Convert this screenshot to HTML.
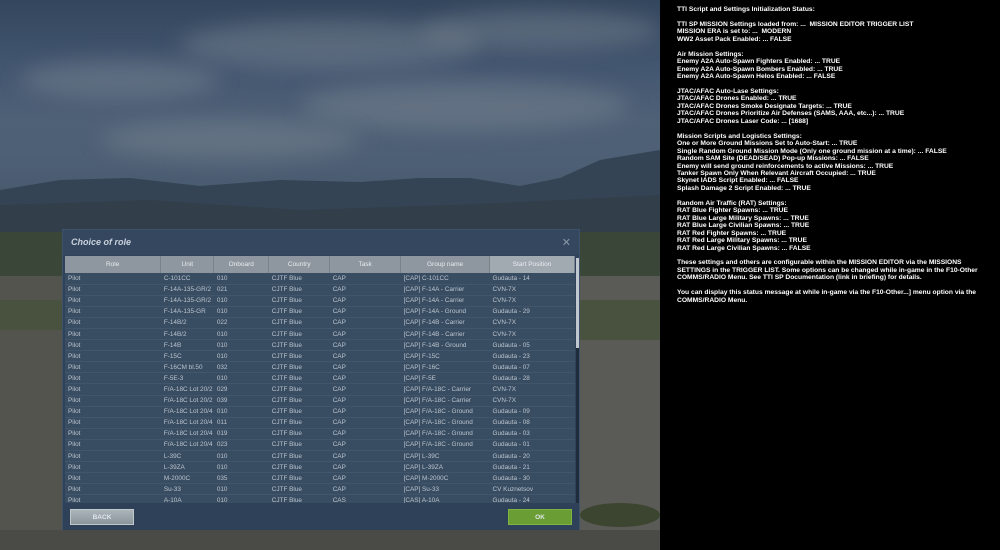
<!DOCTYPE html>
<html><head><meta charset="utf-8"><style>
*{margin:0;padding:0;box-sizing:border-box}
body{width:1000px;height:550px;overflow:hidden;position:relative;font-family:"Liberation Sans",sans-serif;background:#000}
#scene{position:absolute;left:0;top:0;width:660px;height:550px;overflow:hidden;
background:linear-gradient(180deg,#33465d 0%,#435670 12%,#4f6177 22%,#4d5f74 30%,#46576b 38%,#3f4d5c 45%)}
.cl{position:absolute;border-radius:50%;background:rgba(130,140,150,.4);filter:blur(10px)}
#mtn{position:absolute;left:0;top:0}
#text{position:absolute;left:677px;top:6px;color:#fff;font-weight:bold;font-size:6.7px;line-height:7.45px;white-space:pre;font-family:"Liberation Sans",sans-serif}
#dlg{position:absolute;left:62px;top:229px;width:518px;height:301px;background:#2f4259;border:1px solid #3d526b}
#hd{height:25px;background:#34475f;color:#c9d2dc;font-style:italic;font-weight:bold;font-size:9px;line-height:25px;padding-left:8px}
#x{position:absolute;right:8px;top:6px;color:#8a98a8;font-size:11px}
table{position:absolute;left:2px;top:26px;width:510px;border-collapse:collapse;font-size:6.4px;color:#bcc5ce}
th{background:#8e979f;color:#e8ecef;font-weight:normal;height:17px;border-right:1px solid #7a838b;font-size:6.5px}
th:last-child{background:#a2aab1}
td{height:11.1px;padding-left:3px;background:rgba(58,78,100,.82);border-bottom:1px solid rgba(80,100,120,.6);white-space:nowrap;overflow:hidden}
#sb{position:absolute;left:513px;top:28px;width:3px;height:245px;background:#1e2c3c}
#sb div{height:90px;background:#c0c7ce;width:3px}
#ft{position:absolute;left:0;top:273px;width:516px;height:27px;background:#2e4159}
.btn{position:absolute;top:6px;width:64px;height:16px;font-size:6.5px;font-weight:bold;color:#e0e6ea;text-align:center;line-height:16px}
</style></head><body>
<div id="scene">
<div class="cl" style="left:180px;top:20px;width:300px;height:50px"></div>
<div class="cl" style="left:20px;top:60px;width:200px;height:40px"></div>
<div class="cl" style="left:300px;top:80px;width:330px;height:50px"></div>
<div class="cl" style="left:100px;top:120px;width:260px;height:40px"></div>
<div class="cl" style="left:420px;top:10px;width:240px;height:40px"></div>
<svg id="mtn" width="660" height="550">
<path d="M0 190 L60 180 L130 178 L200 186 L280 180 L360 182 L420 178 L470 178 L520 186 L560 178 L600 160 L660 150 L660 240 L0 240Z" fill="#344455"/>
<path d="M0 205 L150 200 L300 210 L450 205 L560 200 L660 195 L660 240 L0 240Z" fill="#323f4a"/>
<rect x="0" y="232" width="660" height="45" fill="#3a4638"/>
<rect x="0" y="276" width="62" height="274" fill="#52544d"/>
<rect x="580" y="276" width="80" height="274" fill="#5a5b56"/>
<rect x="0" y="300" width="62" height="30" fill="#48523f"/>
<rect x="580" y="300" width="80" height="40" fill="#48523f"/>
<rect x="0" y="530" width="660" height="20" fill="#4a4b46"/>
<ellipse cx="620" cy="515" rx="40" ry="12" fill="#3c4530"/>
</svg>
<div id="dlg">
<div id="hd">Choice of role</div><div id="x">✕</div>
<table>
<colgroup><col style="width:96px"><col style="width:53px"><col style="width:55px"><col style="width:61px"><col style="width:71px"><col style="width:89px"><col style="width:85px"></colgroup>
<tr><th>Role</th><th>Unit</th><th>Onboard</th><th>Country</th><th>Task</th><th>Group name</th><th>Start Position</th></tr>
<tr><td>Pilot</td><td>C-101CC</td><td>010</td><td>CJTF Blue</td><td>CAP</td><td>[CAP] C-101CC</td><td>Gudauta - 14</td></tr>
<tr><td>Pilot</td><td>F-14A-135-GR/2</td><td>021</td><td>CJTF Blue</td><td>CAP</td><td>[CAP] F-14A - Carrier</td><td>CVN-7X</td></tr>
<tr><td>Pilot</td><td>F-14A-135-GR/2</td><td>010</td><td>CJTF Blue</td><td>CAP</td><td>[CAP] F-14A - Carrier</td><td>CVN-7X</td></tr>
<tr><td>Pilot</td><td>F-14A-135-GR</td><td>010</td><td>CJTF Blue</td><td>CAP</td><td>[CAP] F-14A - Ground</td><td>Gudauta - 29</td></tr>
<tr><td>Pilot</td><td>F-14B/2</td><td>022</td><td>CJTF Blue</td><td>CAP</td><td>[CAP] F-14B - Carrier</td><td>CVN-7X</td></tr>
<tr><td>Pilot</td><td>F-14B/2</td><td>010</td><td>CJTF Blue</td><td>CAP</td><td>[CAP] F-14B - Carrier</td><td>CVN-7X</td></tr>
<tr><td>Pilot</td><td>F-14B</td><td>010</td><td>CJTF Blue</td><td>CAP</td><td>[CAP] F-14B - Ground</td><td>Gudauta - 05</td></tr>
<tr><td>Pilot</td><td>F-15C</td><td>010</td><td>CJTF Blue</td><td>CAP</td><td>[CAP] F-15C</td><td>Gudauta - 23</td></tr>
<tr><td>Pilot</td><td>F-16CM bl.50</td><td>032</td><td>CJTF Blue</td><td>CAP</td><td>[CAP] F-16C</td><td>Gudauta - 07</td></tr>
<tr><td>Pilot</td><td>F-5E-3</td><td>010</td><td>CJTF Blue</td><td>CAP</td><td>[CAP] F-5E</td><td>Gudauta - 28</td></tr>
<tr><td>Pilot</td><td>F/A-18C Lot 20/2</td><td>029</td><td>CJTF Blue</td><td>CAP</td><td>[CAP] F/A-18C - Carrier</td><td>CVN-7X</td></tr>
<tr><td>Pilot</td><td>F/A-18C Lot 20/2</td><td>039</td><td>CJTF Blue</td><td>CAP</td><td>[CAP] F/A-18C - Carrier</td><td>CVN-7X</td></tr>
<tr><td>Pilot</td><td>F/A-18C Lot 20/4</td><td>010</td><td>CJTF Blue</td><td>CAP</td><td>[CAP] F/A-18C - Ground</td><td>Gudauta - 09</td></tr>
<tr><td>Pilot</td><td>F/A-18C Lot 20/4</td><td>011</td><td>CJTF Blue</td><td>CAP</td><td>[CAP] F/A-18C - Ground</td><td>Gudauta - 08</td></tr>
<tr><td>Pilot</td><td>F/A-18C Lot 20/4</td><td>019</td><td>CJTF Blue</td><td>CAP</td><td>[CAP] F/A-18C - Ground</td><td>Gudauta - 03</td></tr>
<tr><td>Pilot</td><td>F/A-18C Lot 20/4</td><td>023</td><td>CJTF Blue</td><td>CAP</td><td>[CAP] F/A-18C - Ground</td><td>Gudauta - 01</td></tr>
<tr><td>Pilot</td><td>L-39C</td><td>010</td><td>CJTF Blue</td><td>CAP</td><td>[CAP] L-39C</td><td>Gudauta - 20</td></tr>
<tr><td>Pilot</td><td>L-39ZA</td><td>010</td><td>CJTF Blue</td><td>CAP</td><td>[CAP] L-39ZA</td><td>Gudauta - 21</td></tr>
<tr><td>Pilot</td><td>M-2000C</td><td>035</td><td>CJTF Blue</td><td>CAP</td><td>[CAP] M-2000C</td><td>Gudauta - 30</td></tr>
<tr><td>Pilot</td><td>Su-33</td><td>010</td><td>CJTF Blue</td><td>CAP</td><td>[CAP] Su-33</td><td>CV Kuznetsov</td></tr>
<tr><td>Pilot</td><td>A-10A</td><td>010</td><td>CJTF Blue</td><td>CAS</td><td>[CAS] A-10A</td><td>Gudauta - 24</td></tr>
</table>
<div id="sb"><div></div></div>
<div id="ft">
<div class="btn" style="left:7px;background:linear-gradient(#aab4b9,#8b969c);border:1px solid #c0c8cc">BACK</div>
<div class="btn" style="left:445px;background:#6a9e34;border:1px solid #7fb444">OK</div>
</div>
</div>
</div>
<div id="text">TTI Script and Settings Initialization Status:

TTI SP MISSION Settings loaded from: ...  MISSION EDITOR TRIGGER LIST
MISSION ERA is set to: ...  MODERN
WW2 Asset Pack Enabled: ... FALSE

Air Mission Settings:
Enemy A2A Auto-Spawn Fighters Enabled: ... TRUE
Enemy A2A Auto-Spawn Bombers Enabled: ... TRUE
Enemy A2A Auto-Spawn Helos Enabled: ... FALSE

JTAC/AFAC Auto-Lase Settings:
JTAC/AFAC Drones Enabled: ... TRUE
JTAC/AFAC Drones Smoke Designate Targets: ... TRUE
JTAC/AFAC Drones Prioritize Air Defenses (SAMS, AAA, etc...): ... TRUE
JTAC/AFAC Drones Laser Code: ... [1688]

Mission Scripts and Logistics Settings:
One or More Ground Missions Set to Auto-Start: ... TRUE
Single Random Ground Mission Mode (Only one ground mission at a time): ... FALSE
Random SAM Site (DEAD/SEAD) Pop-up Missions: ... FALSE
Enemy will send ground reinforcements to active Missions: ... TRUE
Tanker Spawn Only When Relevant Aircraft Occupied: ... TRUE
Skynet IADS Script Enabled: ... FALSE
Splash Damage 2 Script Enabled: ... TRUE

Random Air Traffic (RAT) Settings:
RAT Blue Fighter Spawns: ... TRUE
RAT Blue Large Military Spawns: ... TRUE
RAT Blue Large Civilian Spawns: ... TRUE
RAT Red Fighter Spawns: ... TRUE
RAT Red Large Military Spawns: ... TRUE
RAT Red Large Civilian Spawns: ... FALSE

These settings and others are configurable within the MISSION EDITOR via the MISSIONS
SETTINGS in the TRIGGER LIST. Some options can be changed while in-game in the F10-Other
COMMS/RADIO Menu. See TTI SP Documentation (link in briefing) for details.

You can display this status message at while in-game via the F10-Other...] menu option via the
COMMS/RADIO Menu.</div>
</body></html>
